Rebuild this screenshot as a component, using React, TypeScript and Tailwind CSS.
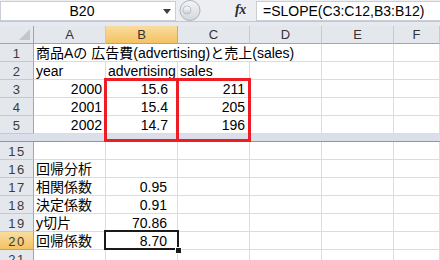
import React from "react";

const F = "font-['Liberation_Sans','Noto_Sans_CJK_JP',sans-serif]";

type Cell = { t?: string; align?: "l" | "r"; span?: number; pr?: string };

const cols = ["A", "B", "C", "D", "E", "F"];

function RowHeader({ n, sel }: { n: string; sel?: boolean }) {
  return (
    <div
      className={
        "h-[18px] flex items-end justify-center border-b border-r text-[13px] tracking-[1.5px] leading-[13px] pb-[1px] text-[#3b3b3b] " +
        (sel
          ? "bg-gradient-to-b from-[#f9dc9e] to-[#f3c361] border-b-[#c9a24e] border-r-[#c9a24e]"
          : "bg-[#e4e7ec] border-b-[#c5c9d0] border-r-[#9fa6b1]")
      }
    >
      <span className="pl-[1px]">{n}</span>
    </div>
  );
}

function Row({ n, cells, sel }: { n: string; cells: Cell[]; sel?: boolean }) {
  const out: React.ReactNode[] = [];
  let used = 0;
  cells.forEach((c, i) => {
    const span = c.span ?? 1;
    used += span;
    out.push(
      <div
        key={i}
        className={
          "h-[18px] flex items-end border-b border-r border-[#dadcdd] text-[14px] leading-[13px] pb-[1px] text-black whitespace-nowrap overflow-visible " +
          (c.align === "r" ? "justify-end " : "justify-start pl-[2px] ") +
          (c.pr ?? "pr-[3px]") +
          (span === 4 ? " col-span-4" : "")
        }
      >
        {c.t ? <span>{c.t}</span> : null}
      </div>
    );
  });
  while (used < 6) {
    out.push(<div key={"e" + used} className="h-[18px] border-b border-r border-[#dadcdd]" />);
    used++;
  }
  return (
    <>
      <RowHeader n={n} sel={sel} />
      {out}
    </>
  );
}

export default function App() {
  return (
    <div className={"relative w-[440px] h-[260px] overflow-hidden bg-white " + F}>
      {/* formula bar */}
      <div className="flex h-[22px] bg-[#eceef2] border-b border-[#c3c8cf]">
        <div className="mt-[1px] h-[20px] w-[176px] bg-white border border-[#c9ced6] flex">
          <div className="flex-1 flex items-center justify-center text-[14px] text-black pl-[4px]">B20</div>
          <div className="w-[16px] flex items-center justify-center">
            <svg width="8" height="5" viewBox="0 0 8 5">
              <path d="M0 0 H8 L4 5 Z" fill="#3f3f3f" />
            </svg>
          </div>
        </div>
        <div className="w-[80px] relative flex items-center">
          <svg className="ml-[2px]" width="30" height="21" viewBox="0 0 30 21">
            <defs>
              <linearGradient id="g1" x1="0" y1="0" x2="0" y2="1">
                <stop offset="0" stopColor="#f4f5f7" />
                <stop offset="1" stopColor="#d2d6dc" />
              </linearGradient>
              <linearGradient id="g2" x1="0" y1="0" x2="0" y2="1">
                <stop offset="0" stopColor="#ffffff" />
                <stop offset="1" stopColor="#c9cdd3" />
              </linearGradient>
            </defs>
            <circle cx="12" cy="10.5" r="10" fill="url(#g1)" stroke="#aeb4bd" strokeWidth="1" />
            <circle cx="9" cy="10" r="4" fill="url(#g2)" stroke="#b3b8c0" strokeWidth="0.8" />
          </svg>
          <span className="absolute left-[59px] top-[3px] font-['Liberation_Serif',serif] italic font-bold text-[14px] leading-[14px] text-[#2b2b2b] tracking-[-0.5px]">
            fx
          </span>
        </div>
        <div className="mt-[1px] h-[20px] flex-1 bg-white border border-r-0 border-[#c9ced6] flex items-center pl-[6px] text-[14px] text-black whitespace-nowrap">
          =SLOPE(C3:C12,B3:B12)
        </div>
      </div>
      <div className="h-[4px] bg-[#e6e9ed]" />

      {/* grid */}
      <div className="grid grid-cols-[34px_72px_72px_72px_72px_72px_1fr]">
        {/* header row */}
        <div className="h-[18px] bg-[#e4e7ec] border-b border-r border-b-[#9fa6b1] border-r-[#9fa6b1] relative">
          <svg className="absolute right-[3px] bottom-[3px]" width="11" height="11" viewBox="0 0 11 11">
            <path d="M11 0 V11 H0 Z" fill="#c3c7cd" />
          </svg>
        </div>
        {cols.map((c) => (
          <div
            key={c}
            className={
              "h-[18px] flex items-center justify-center border-b border-r text-[13px] text-[#333] " +
              (c === "B"
                ? "bg-gradient-to-b from-[#f9dc9e] to-[#f3c361] border-b-[#c9a24e] border-r-[#d3ab58]"
                : "bg-[#e4e7ec] border-b-[#9fa6b1] border-r-[#c5c9d0]")
            }
          >
            {c}
          </div>
        ))}

        <Row n="1" cells={[{ t: "商品Aの 広告費(advertising)と売上(sales)", span: 4 }]} />
        <Row n="2" cells={[{ t: "year" }, { t: "advertising" }, { t: "sales" }]} />
        <Row n="3" cells={[{ t: "2000", align: "r" }, { t: "15.6", align: "r", pr: "pr-[9px]" }, { t: "211", align: "r", pr: "pr-[4px]" }]} />
        <Row n="4" cells={[{ t: "2001", align: "r" }, { t: "15.4", align: "r", pr: "pr-[9px]" }, { t: "205", align: "r", pr: "pr-[4px]" }]} />
        <Row n="5" cells={[{ t: "2002", align: "r" }, { t: "14.7", align: "r", pr: "pr-[9px]" }, { t: "196", align: "r", pr: "pr-[4px]" }]} />
      </div>

      {/* frozen pane split */}
      <div className="h-[8px] bg-[#dadfe9] border-b border-[#8f96a4]" />

      <div className="grid grid-cols-[34px_72px_72px_72px_72px_72px_1fr]">
        <Row n="15" cells={[]} />
        <Row n="16" cells={[{ t: "回帰分析" }]} />
        <Row n="17" cells={[{ t: "相関係数" }, { t: "0.95", align: "r", pr: "pr-[10px]" }]} />
        <Row n="18" cells={[{ t: "決定係数" }, { t: "0.91", align: "r", pr: "pr-[10px]" }]} />
        <Row n="19" cells={[{ t: "y切片" }, { t: "70.86", align: "r", pr: "pr-[10px]" }]} />
        <Row n="20" sel cells={[{ t: "回帰係数" }, { t: "8.70", align: "r", pr: "pr-[10px]" }]} />
        <Row n="21" cells={[]} />
      </div>

      {/* red boxes */}
      <div className="absolute left-[104px] top-[78px] w-[75px] h-[64px] border-[3px] border-[#ee1c25]" />
      <div className="absolute left-[176px] top-[78px] w-[75px] h-[64px] border-[3px] border-[#ee1c25]" />

      {/* selection */}
      <div className="absolute left-[104px] top-[230px] w-[75px] h-[20px] border-2 border-[#1a1a1a]" />
      <div className="absolute left-[175px] top-[247px] w-[7px] h-[7px] bg-[#1a1a1a] border border-white" />
    </div>
  );
}
